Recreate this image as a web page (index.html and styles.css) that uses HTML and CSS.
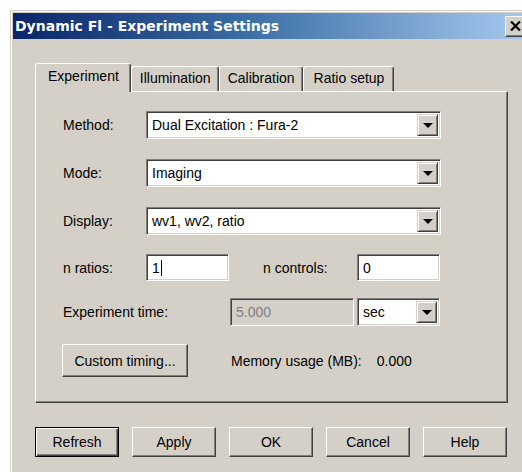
FILE: index.html
```html
<!DOCTYPE html>
<html>
<head>
<meta charset="utf-8">
<title>Dynamic Fl - Experiment Settings</title>
<link rel="stylesheet" href="styles.css">
</head>
<body>
<div class="window">
  <div class="titlebar">
    <span class="title">Dynamic Fl - Experiment Settings</span>
    <span class="close">
      <svg width="11" height="10" viewBox="0 0 11 10"><path d="M1 0.5 L10 9.5 M10 0.5 L1 9.5" stroke="#000" stroke-width="2.2"/></svg>
    </span>
  </div>
  <div class="client">
    <div class="tabs">
      <div class="tab active">Experiment</div>
      <div class="tab">Illumination</div>
      <div class="tab">Calibration</div>
      <div class="tab tab-wide">Ratio setup</div>
    </div>
    <div class="panel">
      <div class="row">
        <span class="label">Method:</span>
        <div class="combo wide"><span class="value">Dual Excitation : Fura-2</span><span class="drop"><i class="arrow"></i></span></div>
      </div>
      <div class="row gap-combo">
        <span class="label">Mode:</span>
        <div class="combo wide"><span class="value">Imaging</span><span class="drop"><i class="arrow"></i></span></div>
      </div>
      <div class="row gap-combo">
        <span class="label">Display:</span>
        <div class="combo wide"><span class="value">wv1, wv2, ratio</span><span class="drop"><i class="arrow"></i></span></div>
      </div>
      <div class="row gap-fields">
        <span class="label">n ratios:</span>
        <div class="field short"><span class="value">1</span><span class="caret"></span></div>
        <span class="label label-controls">n controls:</span>
        <div class="field short"><span class="value">0</span></div>
      </div>
      <div class="row gap-time">
        <span class="label label-time">Experiment time:</span>
        <div class="field disabled time"><span class="value">5.000</span></div>
        <div class="combo unit"><span class="value">sec</span><span class="drop"><i class="arrow"></i></span></div>
      </div>
      <div class="row gap-actions">
        <button class="btn custom">Custom timing...</button>
        <span class="memory">Memory usage (MB):</span>
        <span class="memory-value">0.000</span>
      </div>
    </div>
    <div class="buttons">
      <button class="btn dlg default">Refresh</button>
      <button class="btn dlg">Apply</button>
      <button class="btn dlg">OK</button>
      <button class="btn dlg">Cancel</button>
      <button class="btn dlg">Help</button>
    </div>
  </div>
</div>
</body>
</html>
```

FILE: styles.css
```css
* { box-sizing: border-box; }

html, body {
  margin: 0;
  padding: 0;
}

body {
  width: 522px;
  height: 472px;
  overflow: hidden;
  background: #ffffff;
  font-family: "Liberation Sans", Arial, sans-serif;
  font-size: 14px;
  color: #000;
}

/* classic window frame */
.window {
  margin: 10px 0 0 10px;
  width: 518px;
  height: 480px;
  background: #d4d0c8;
  border-top: 1px solid #d4d0c8;
  border-left: 1px solid #d4d0c8;
  padding: 2px 0 0 2px;
  box-shadow: inset 1px 1px #ffffff;
}

.titlebar {
  height: 26px;
  display: flex;
  align-items: center;
  background: linear-gradient(to right, #0a246a 0%, #3a6ea5 45%, #a6caf0 100%);
  padding-left: 2px;
}

.title {
  font-family: "DejaVu Sans", sans-serif;
  font-weight: bold;
  font-size: 14px;
  color: #ffffff;
  white-space: nowrap;
}

.close {
  margin-left: auto;
  margin-right: 2px;
  width: 21px;
  height: 21px;
  display: flex;
  align-items: center;
  justify-content: center;
  background: #d4d0c8;
  border: 1px solid;
  border-color: #ffffff #404040 #404040 #ffffff;
  box-shadow: inset -1px -1px #808080;
}

.client {
  padding: 24px 0 0 22px;
}

/* tab strip */
.tabs {
  display: flex;
  align-items: flex-end;
  height: 28px;
  position: relative;
  z-index: 1;
}

.tab {
  height: 25px;
  padding: 3px 7px 0 8px;
  background: #d4d0c8;
  border-top: 1px solid #ffffff;
  border-left: 1px solid #ffffff;
  border-right: 1px solid #404040;
  box-shadow: inset -1px 0 #808080;
  border-radius: 3px 3px 0 0;
  white-space: nowrap;
}

.tab-wide {
  padding: 3px 9px 0 10px;
}

.tab.active {
  height: 29px;
  margin-bottom: -1px;
  padding: 4px 11px 0 12px;
}

.panel {
  width: 473px;
  height: 312px;
  border-top: 1px solid #ffffff;
  border-left: 1px solid #ffffff;
  border-right: 1px solid #404040;
  border-bottom: 1px solid #404040;
  box-shadow: inset -1px -1px #808080;
  padding: 19px 0 0 27px;
}

.row {
  display: flex;
  align-items: center;
}

.gap-combo { margin-top: 20px; }
.gap-fields { margin-top: 19px; }
.gap-time { margin-top: 17px; }
.gap-actions { margin-top: 18px; }

.label {
  width: 83px;
  flex: none;
  white-space: nowrap;
}

.label-controls {
  margin-left: 34px;
  width: 94px;
}

.label-time {
  width: 167px;
}

/* sunken edit / combo boxes */
.combo, .field {
  display: flex;
  align-items: center;
  height: 28px;
  background: #ffffff;
  border: 1px solid;
  border-color: #808080 #ffffff #ffffff #808080;
  box-shadow: inset 1px 1px #404040, inset -1px -1px #d4d0c8;
  padding: 2px;
}

.combo.wide { width: 295px; }
.combo.unit { width: 83px; margin-left: 3px; }

.field.short { height: 27px; width: 83px; }
.field.time { width: 124px; }

.field.disabled {
  background: #d4d0c8;
  color: #808080;
}

.value {
  flex: 1;
  padding-left: 3px;
  white-space: nowrap;
}

.field .value { flex: none; }

.caret {
  width: 1px;
  height: 16px;
  background: #000;
  margin-left: 1px;
}

.drop {
  flex: none;
  width: 21px;
  height: 100%;
  display: flex;
  align-items: center;
  justify-content: center;
  background: #d4d0c8;
  border: 1px solid;
  border-color: #d4d0c8 #404040 #404040 #d4d0c8;
  box-shadow: inset 1px 1px #ffffff, inset -1px -1px #808080;
}

.arrow {
  width: 0;
  height: 0;
  border-left: 5px solid transparent;
  border-right: 5px solid transparent;
  border-top: 5px solid #000;
  margin-top: 1px;
}

/* push buttons */
.btn {
  font-family: "Liberation Sans", Arial, sans-serif;
  font-size: 14px;
  color: #000;
  background: #d4d0c8;
  border: 1px solid;
  border-color: #ffffff #404040 #404040 #ffffff;
  box-shadow: inset -1px -1px #808080;
  padding: 0;
  margin: 0;
}

.btn.custom {
  width: 126px;
  height: 33px;
  margin-left: -1px;
}

.memory {
  margin-left: 43px;
}

.memory-value {
  margin-left: 15px;
}

.buttons {
  display: flex;
  gap: 13px;
  margin-top: 24px;
}

.btn.dlg {
  width: 84px;
  height: 30px;
}

.btn.default {
  border: 1px solid #000;
  box-shadow: inset 1px 1px #ffffff, inset -1px -1px #404040, inset -2px -2px #808080;
}
```
